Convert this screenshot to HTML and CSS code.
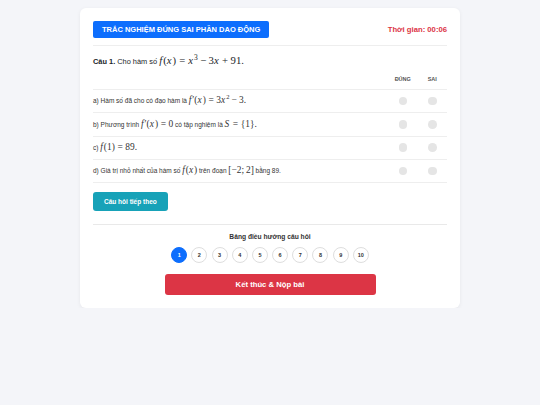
FILE: index.html
```html
<!DOCTYPE html>
<html lang="vi">
<head>
<meta charset="utf-8">
<link rel="stylesheet" href="styles.css">
</head>
<body>
<div class="card">
  <div class="header">
    <div class="title">TRẮC NGHIỆM ĐÚNG SAI PHẦN DAO ĐỘNG</div>
    <div class="timer">Thời gian: 00:06</div>
  </div>
  <div class="question"><b>Câu 1.</b> Cho hàm số <span class="m"><i>f</i>(<i>x</i>)<span class="rel">=</span><i>x</i><sup>3</sup><span class="bin">−</span>3<i>x</i><span class="bin">+</span>91.</span></div>
  <div class="table">
    <div class="row head">
      <div class="stmt"></div>
      <div class="col">ĐÚNG</div>
      <div class="col">SAI</div>
    </div>
    <div class="row">
      <div class="stmt">a) Hàm số đã cho có đạo hàm là <span class="m"><i>f</i>′(<i>x</i>)<span class="rel">=</span>3<i>x</i><sup>2</sup><span class="bin">−</span>3.</span></div>
      <div class="col"><span class="radio"></span></div>
      <div class="col"><span class="radio"></span></div>
    </div>
    <div class="row">
      <div class="stmt">b) Phương trình <span class="m"><i>f</i>′(<i>x</i>)<span class="rel">=</span>0</span> có tập nghiệm là <span class="m"><i>S</i><span class="rel">=</span>{1}.</span></div>
      <div class="col"><span class="radio"></span></div>
      <div class="col"><span class="radio"></span></div>
    </div>
    <div class="row">
      <div class="stmt">c) <span class="m"><i>f</i>(1)<span class="rel">=</span>89.</span></div>
      <div class="col"><span class="radio"></span></div>
      <div class="col"><span class="radio"></span></div>
    </div>
    <div class="row">
      <div class="stmt">d) Giá trị nhỏ nhất của hàm số <span class="m"><i>f</i>(<i>x</i>)</span> trên đoạn <span class="m">[−2;&#8201;2]</span> bằng 89.</div>
      <div class="col"><span class="radio"></span></div>
      <div class="col"><span class="radio"></span></div>
    </div>
  </div>
  <div class="actions">
    <button class="next">Câu hỏi tiếp theo</button>
  </div>
  <div class="nav">
    <div class="nav-title">Bảng điều hướng câu hỏi</div>
    <div class="nums">
      <span class="num active">1</span>
      <span class="num">2</span>
      <span class="num">3</span>
      <span class="num">4</span>
      <span class="num">5</span>
      <span class="num">6</span>
      <span class="num">7</span>
      <span class="num">8</span>
      <span class="num">9</span>
      <span class="num">10</span>
    </div>
    <button class="submit">Kết thúc &amp; Nộp bài</button>
  </div>
</div>
</body>
</html>
```

FILE: styles.css
```css
html, body {
  margin: 0;
  padding: 0;
  background: #f4f5f9;
  font-family: "Liberation Sans", Arial, sans-serif;
  color: #212529;
}
body {
  padding-top: 8px;
}
.card {
  width: 380px;
  margin: 0 auto;
  box-sizing: border-box;
  background: #fff;
  border-radius: 6px;
  box-shadow: 0 1px 4px rgba(0, 0, 0, 0.06);
  padding: 13px;
}
.header {
  display: flex;
  justify-content: space-between;
  align-items: center;
  padding-bottom: 7px;
  border-bottom: 1px solid #eeeeee;
}
.title {
  background: #0d6efd;
  color: #fff;
  font-weight: bold;
  font-size: 7.5px;
  height: 17px;
  line-height: 17px;
  padding: 0 9px;
  border-radius: 2px;
}
.timer {
  color: #dc3545;
  font-weight: bold;
  font-size: 7.7px;
}
.question {
  font-size: 7.4px;
  margin-top: 9px;
  line-height: 14px;
}
.m {
  font-family: "Liberation Serif", "Times New Roman", serif;
  font-size: 1.45em;
  line-height: 1;
  white-space: nowrap;
}
.m i {
  margin-right: 0.1em;
}
.m .rel {
  margin: 0 0.2778em;
}
.m .bin {
  margin: 0 0.2222em;
}
.m sup {
  font-size: 0.7em;
  line-height: 0;
  vertical-align: 0.55em;
}
.row {
  display: flex;
  align-items: center;
  height: 22.3px;
  border-bottom: 1px solid #eeeeee;
  font-size: 6.5px;
  color: #333;
}
.row.head {
  height: 20px;
  font-size: 5.5px;
  font-weight: bold;
  color: #555;
}
.stmt {
  flex: 1;
}
.col {
  width: 29.5px;
  text-align: center;
  display: flex;
  justify-content: center;
}
.radio {
  width: 8.5px;
  height: 8.5px;
  border-radius: 50%;
  background: #e5e5e5;
  display: block;
}
.actions {
  padding: 9px 0 13px;
  border-bottom: 1px solid #e9e9e9;
}
button {
  font-family: "Liberation Sans", Arial, sans-serif;
  border: none;
  color: #fff;
  font-weight: bold;
  cursor: pointer;
}
.next {
  background: #17a2b8;
  font-size: 6.5px;
  height: 19px;
  padding: 0 11px;
  border-radius: 3px;
  display: block;
}
.nav {
  display: flex;
  flex-direction: column;
  align-items: center;
  padding-top: 7px;
}
.nav-title {
  font-size: 6.7px;
  font-weight: bold;
  color: #333;
  line-height: 9px;
}
.nums {
  display: flex;
  gap: 4.2px;
  margin-top: 6px;
}
.num {
  width: 16px;
  height: 16px;
  box-sizing: border-box;
  border-radius: 50%;
  border: 1px solid #dedede;
  display: flex;
  align-items: center;
  justify-content: center;
  font-size: 5.5px;
  font-weight: bold;
  color: #333;
  background: #fff;
}
.num.active {
  background: #0d6efd;
  border-color: #0d6efd;
  color: #fff;
}
.submit {
  margin-top: 11px;
  width: 211px;
  height: 21px;
  background: #dc3545;
  font-size: 7.7px;
  border-radius: 3px;
}
```
